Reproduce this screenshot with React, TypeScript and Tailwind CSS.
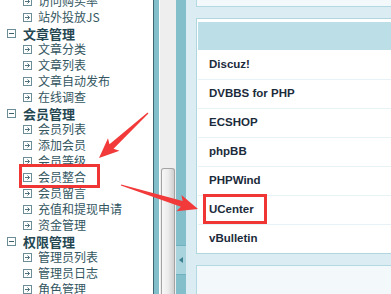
import React from "react";

type Item = { label: string; group?: boolean };

const menu: Item[] = [
  { label: "访问购买率" },
  { label: "站外投放JS" },
  { label: "文章管理", group: true },
  { label: "文章分类" },
  { label: "文章列表" },
  { label: "文章自动发布" },
  { label: "在线调查" },
  { label: "会员管理", group: true },
  { label: "会员列表" },
  { label: "添加会员" },
  { label: "会员等级" },
  { label: "会员整合" },
  { label: "会员留言" },
  { label: "充值和提现申请" },
  { label: "资金管理" },
  { label: "权限管理", group: true },
  { label: "管理员列表" },
  { label: "管理员日志" },
  { label: "角色管理" },
];

const plugins = ["Discuz!", "DVBBS for PHP", "ECSHOP", "phpBB", "PHPWind", "UCenter", "vBulletin"];

function MinusBox() {
  return (
    <svg width="9" height="9" viewBox="0 0 9 9" className="shrink-0">
      <rect x="0.5" y="0.5" width="8" height="8" fill="white" stroke="#6a8d96" />
      <path d="M2 4.5H7" stroke="#3f626c" />
    </svg>
  );
}

function ArrowBox() {
  return (
    <svg width="9" height="9" viewBox="0 0 9 9" className="shrink-0">
      <rect x="0.5" y="0.5" width="8" height="8" fill="white" stroke="#6a8d96" />
      <path d="M2 4.5H6.5M4.5 2.5L6.5 4.5L4.5 6.5" stroke="#4c717b" fill="none" />
    </svg>
  );
}

// red annotation arrow, drawn along its own axis then rotated into place
function RedArrow({ x1, y1, x2, y2 }: { x1: number; y1: number; x2: number; y2: number }) {
  const len = Math.hypot(x2 - x1, y2 - y1);
  const ang = (Math.atan2(y2 - y1, x2 - x1) * 180) / Math.PI;
  const pts = [
    [0, -0.6],
    [len - 17, -3],
    [len - 20, -8.5],
    [len, 0],
    [len - 20, 8.5],
    [len - 17, 3],
    [0, 0.6],
  ]
    .map((p) => p.join(","))
    .join(" ");
  return (
    <g transform={`translate(${x1} ${y1}) rotate(${ang})`}>
      <polygon points={pts} fill="#f23a3a" />
    </g>
  );
}

export default function App() {
  return (
    <div className="relative flex h-[294px] w-[391px] overflow-hidden bg-[#dbedf2] font-['Liberation_Sans','Noto_Sans_CJK_SC',sans-serif]">
      {/* left menu */}
      <div className="w-[154px] shrink-0 border-r border-[#3e6570] bg-white">
        <ul className="-mt-[7px] font-['Noto_Sans_CJK_SC',sans-serif]">
          {menu.map((m) =>
            m.group ? (
              <li key={m.label} className="flex h-4 items-center gap-[7px] pl-[7px]">
                <MinusBox />
                <span className="text-[13px] leading-none font-bold text-[#244752]">{m.label}</span>
              </li>
            ) : (
              <li key={m.label} className="flex h-4 items-center gap-[6px] pl-[23px]">
                <ArrowBox />
                <span className="text-[12px] leading-none text-[#33565f]">{m.label}</span>
              </li>
            )
          )}
        </ul>
      </div>

      <div className="w-[5px] shrink-0 bg-[#82bfcb]" />
      <div className="w-px shrink-0 bg-white" />

      {/* scrollbar */}
      <div className="flex w-[16px] shrink-0 flex-col bg-[#eeeeee] pt-[168px]">
        <div className="mx-px flex-1 rounded-t-[3px] border border-b-0 border-[#a3a3a3] bg-gradient-to-r from-[#f7f7f7] via-[#ececec] to-[#cfcfcf]" />
      </div>

      {/* splitter */}
      <div className="flex w-[10px] shrink-0 flex-col bg-[#82bfcb] pt-[245px]">
        <div className="flex h-[30px] items-center justify-center border-y border-[#6fb1bf] bg-[#a9d4de]">
          <span className="block h-0 w-0 border-y-[3.5px] border-r-[4px] border-y-transparent border-r-[#3c7f8e]" />
        </div>
      </div>

      {/* right content */}
      <div className="flex w-[205px] shrink-0 flex-col pl-[10px]">
        <div className="h-[7px] border-b border-l border-[#b3d9e2] bg-[#f3f8fb]" />
        <div className="mt-[11px] border border-r-0 border-[#b0d7e0] bg-white pt-[3px] pl-px">
          <div className="h-[28px] bg-[#bcdee6]" />
          {plugins.map((p, i) => (
            <div
              key={p}
              className={`flex h-[29px] items-center pl-[11px] text-[11.5px] font-bold text-[#1b2b3b] ${
                i > 0 ? "border-t border-[#e6f2f5]" : ""
              }`}
            >
              {p}
            </div>
          ))}
        </div>
        <div className="mt-[11px] flex-1 border-t border-l border-[#b3d9e2] bg-[#f3f8fb]" />
      </div>

      {/* annotations */}
      <div className="absolute left-[19px] top-[164px] h-[24px] w-[81px] border-[3px] border-[#f03535]" />
      <div className="absolute left-[203px] top-[194px] h-[30px] w-[64px] border-[3px] border-[#f03535]" />
      <svg className="pointer-events-none absolute inset-0" width="391" height="294">
        <RedArrow x1={148} y1={113} x2={99} y2={158} />
        <RedArrow x1={121} y1={185} x2={198} y2={209} />
      </svg>
    </div>
  );
}
